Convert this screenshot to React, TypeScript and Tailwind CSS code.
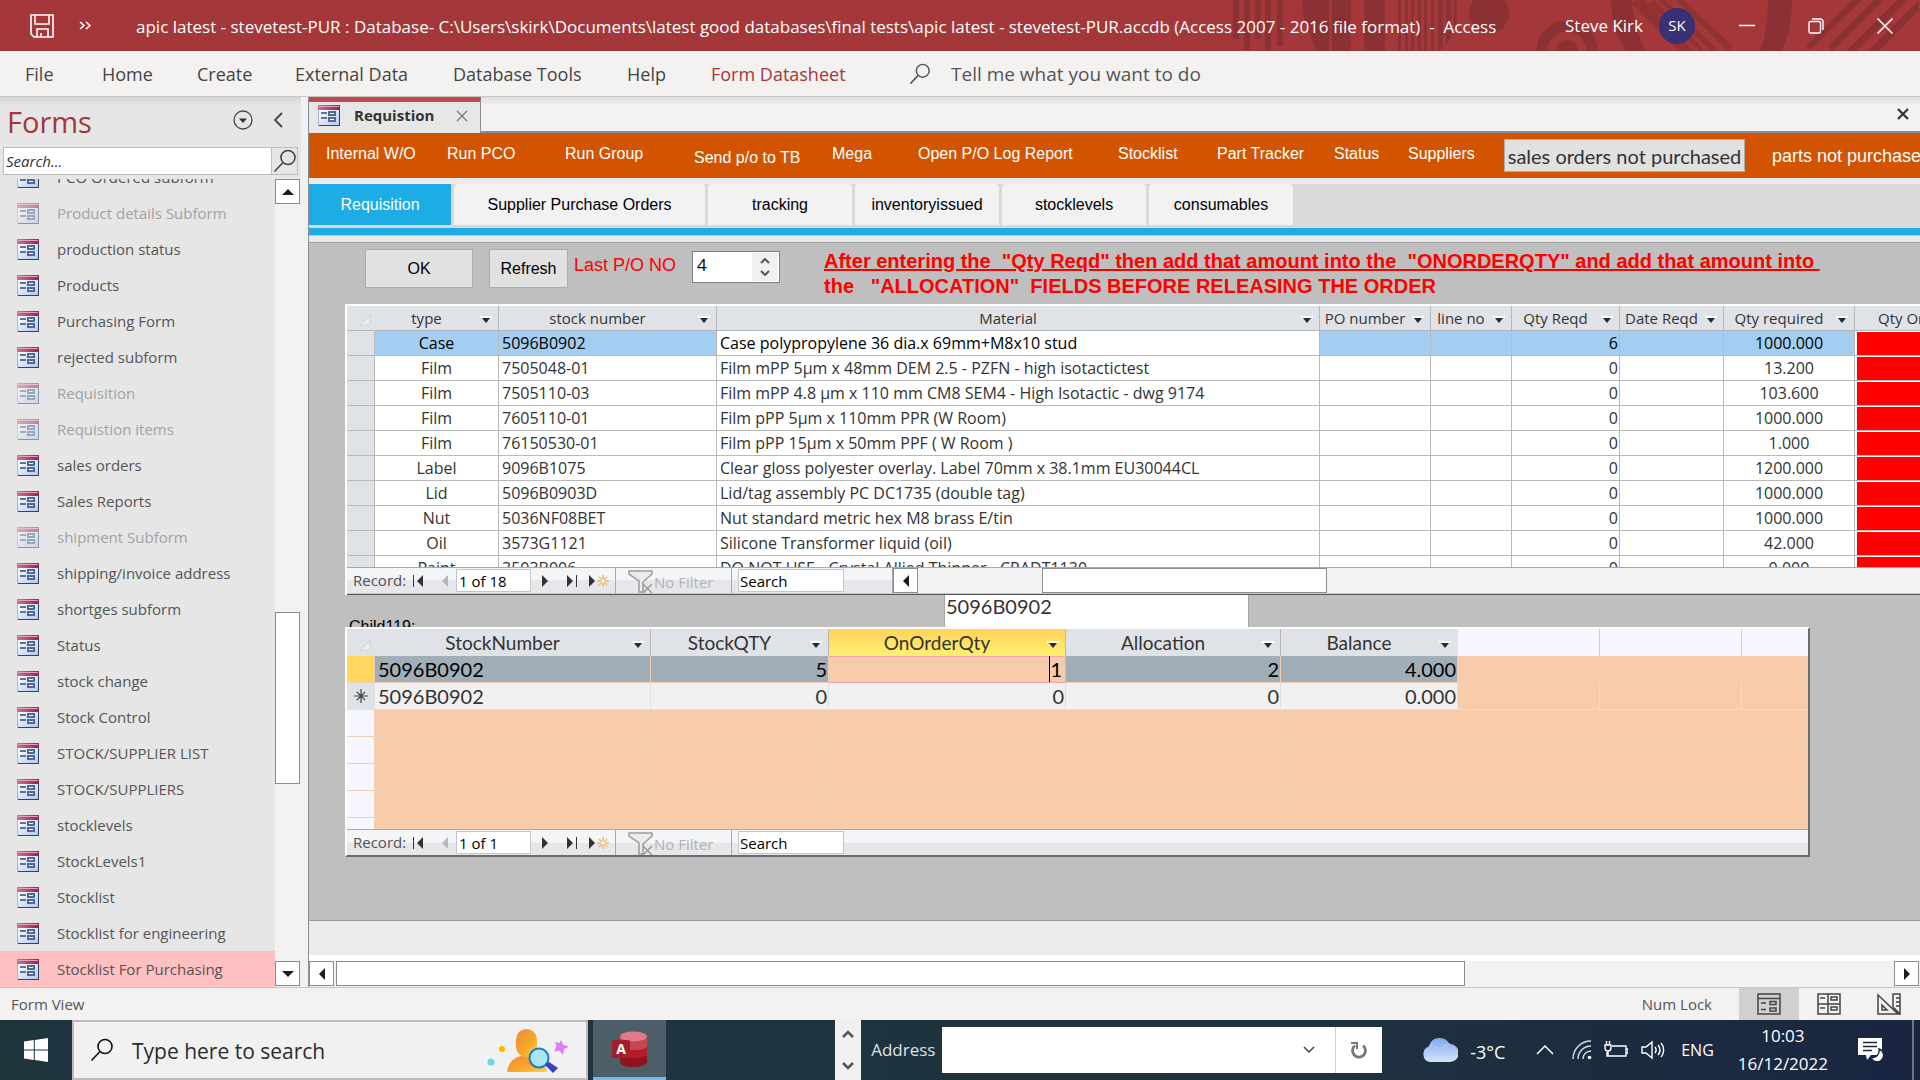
import type { ReactNode } from "react";

const UI = "font-['Segoe_UI','Open_Sans',sans-serif]";
const ARIAL = "font-['Liberation_Sans',Arial,sans-serif]";
const GEO = "font-['Lato',sans-serif]";

const formsList: { name: string; hidden?: boolean; selected?: boolean }[] = [
  { name: "PCO Ordered subform" },
  { name: "Product details Subform", hidden: true },
  { name: "production status" },
  { name: "Products" },
  { name: "Purchasing Form" },
  { name: "rejected subform" },
  { name: "Requisition", hidden: true },
  { name: "Requistion items", hidden: true },
  { name: "sales orders" },
  { name: "Sales Reports" },
  { name: "shipment Subform", hidden: true },
  { name: "shipping/invoice address" },
  { name: "shortges subform" },
  { name: "Status" },
  { name: "stock change" },
  { name: "Stock Control" },
  { name: "STOCK/SUPPLIER LIST" },
  { name: "STOCK/SUPPLIERS" },
  { name: "stocklevels" },
  { name: "StockLevels1" },
  { name: "Stocklist" },
  { name: "Stocklist for engineering" },
  { name: "Stocklist For Purchasing", selected: true },
];

const materials = [
  ["Case", "5096B0902", "Case polypropylene 36 dia.x 69mm+M8x10 stud", "6", "1000.000"],
  ["Film", "7505048-01", "Film mPP 5µm x 48mm DEM 2.5 - PZFN - high isotactictest", "0", "13.200"],
  ["Film", "7505110-03", "Film mPP 4.8 µm x 110 mm CM8 SEM4 - High Isotactic - dwg 9174", "0", "103.600"],
  ["Film", "7605110-01", "Film pPP 5µm x 110mm PPR (W Room)", "0", "1000.000"],
  ["Film", "76150530-01", "Film pPP 15µm x 50mm PPF ( W Room )", "0", "1.000"],
  ["Label", "9096B1075", "Clear gloss polyester overlay. Label 70mm x 38.1mm EU30044CL", "0", "1200.000"],
  ["Lid", "5096B0903D", "Lid/tag assembly PC DC1735 (double tag)", "0", "1000.000"],
  ["Nut", "5036NF08BET", "Nut standard metric hex M8 brass E/tin", "0", "1000.000"],
  ["Oil", "3573G1121", "Silicone Transformer liquid (oil)", "0", "42.000"],
  ["Paint", "3503B006", "DO NOT USE - Crystal Allied Thinner - CRADT1130", "0", "0.000"],
];

const navLinks = [
  { label: "Internal W/O", cls: "w-[121px]" },
  { label: "Run PCO", cls: "w-[118px]" },
  { label: "Run Group", cls: "w-[129px]" },
  { label: "Send p/o to TB", cls: "w-[138px] self-end" },
  { label: "Mega", cls: "w-[86px]" },
  { label: "Open P/O Log Report", cls: "w-[200px]" },
  { label: "Stocklist", cls: "w-[99px]" },
  { label: "Part Tracker", cls: "w-[117px]" },
  { label: "Status", cls: "w-[74px]" },
  { label: "Suppliers", cls: "w-[96px]" },
];

const pageTabs = [
  { label: "Supplier Purchase Orders", cls: "w-[251px]" },
  { label: "tracking", cls: "w-36" },
  { label: "inventoryissued", cls: "w-36" },
  { label: "stocklevels", cls: "w-36" },
  { label: "consumables", cls: "w-36" },
];

function FormIcon({ faded }: { faded?: boolean }) {
  return (
    <svg viewBox="0 0 22 21" className={faded ? "h-[21px] w-[22px] shrink-0 opacity-50" : "h-[21px] w-[22px] shrink-0"} aria-hidden="true">
      <defs>
        <linearGradient id="formBody" x1="0" y1="0" x2="1" y2="1">
          <stop offset="0" stopColor="#ffffff" />
          <stop offset="1" stopColor="#b4c8ee" />
        </linearGradient>
        <linearGradient id="formTop" x1="0" y1="0" x2="1" y2="0">
          <stop offset="0" stopColor="#cf6f93" />
          <stop offset="1" stopColor="#8f2257" />
        </linearGradient>
      </defs>
      <rect x="0" y="0" width="22" height="21" fill="#2f4468" />
      <rect x="0" y="0" width="1" height="21" fill="#a9b6cc" />
      <rect x="1" y="5" width="20" height="15" fill="url(#formBody)" />
      <rect x="0" y="0" width="22" height="5" fill="url(#formTop)" />
      <rect x="1" y="1" width="20" height="1" fill="#e2a2ba" />
      <rect x="3" y="7" width="6" height="2" fill="#5f719c" />
      <rect x="3" y="12" width="6" height="2" fill="#5f719c" />
      <rect x="10" y="6" width="8" height="5" fill="#54678f" />
      <rect x="12" y="8" width="4" height="1" fill="#fff" />
      <rect x="10" y="12" width="8" height="5" fill="#54678f" />
      <rect x="12" y="14" width="4" height="1" fill="#fff" />
    </svg>
  );
}

function Magnifier({ className, stroke = "#444" }: { className: string; stroke?: string }) {
  return (
    <svg viewBox="0 0 24 24" className={className} fill="none" stroke={stroke} strokeWidth="1.6" aria-hidden="true">
      <circle cx="15" cy="8.5" r="7" />
      <path d="M10 13.5 1.5 22.5" />
    </svg>
  );
}

function Triangle({ dir, className = "" }: { dir: "up" | "down" | "left" | "right"; className?: string }) {
  const d = { up: "M0 9 6 3l6 6z", down: "M0 3h12L6 9z", left: "M9 0v12L3 6z", right: "M3 0v12l6-6z" }[dir];
  return (
    <svg viewBox="0 0 12 12" className={"h-3 w-3 " + className} fill="currentColor" aria-hidden="true">
      <path d={d} />
    </svg>
  );
}

function ScrollButton({ dir, label }: { dir: "up" | "down" | "left" | "right"; label: string }) {
  return (
    <button aria-label={label} className="flex h-[25px] w-[25px] shrink-0 items-center justify-center border border-[#8c8c8c] bg-white text-[#1c1c1c]">
      <Triangle dir={dir} />
    </button>
  );
}

function HeadCell({ children, cls = "" }: { children: ReactNode; cls?: string }) {
  return (
    <div className={"flex items-center pr-1 " + cls}>
      <span className="flex-1 whitespace-nowrap text-center">{children}</span>
      <button aria-label={`Filter ${children}`} className="flex w-4 shrink-0 justify-center pt-1">
        <svg viewBox="0 0 12 8" className="h-2 w-3" aria-hidden="true">
          <rect width="12" height="2" fill="#fff" />
          <path d="M2 2h8L6 7z" fill="#222a33" />
        </svg>
      </button>
    </div>
  );
}

function CornerMark() {
  return (
    <svg viewBox="0 0 12 12" className="ml-3 mt-1 h-3 w-3" aria-hidden="true">
      <path d="M11 1v10H1z" fill="#e8ebef" stroke="#c3cfe0" strokeWidth=".8" />
    </svg>
  );
}

function RecordNav({ position, id, scroll }: { position: string; id: string; scroll?: boolean }) {
  return (
    <div className={UI + " flex h-[26px] items-stretch border-t border-[#a5a8ad] bg-linear-to-b from-[#f4f5f7] from-50% to-[#e5e7ea] to-50% text-[15px] leading-[22px] text-[#4f5257]"}>
      <label htmlFor={id} className="w-[62px] shrink-0 pl-1.5 leading-6">Record:</label>
      <button aria-label="First record" className="flex w-6 shrink-0 items-center text-[#333]">
        <svg viewBox="0 0 16 12" className="ml-1 h-3 w-4" fill="currentColor" aria-hidden="true"><path d="M0 0h1v12H0zM10 0v12L4 6z" /></svg>
      </button>
      <button aria-label="Previous record" className="flex w-[23px] shrink-0 items-center justify-center text-[#b5b7bb]"><Triangle dir="left" /></button>
      <input id={id} defaultValue={position} className="my-px w-[75px] shrink-0 border border-[#c6c6c6] bg-white pl-0.5 text-black" />
      <button aria-label="Next record" className="flex w-7 shrink-0 items-center justify-center text-[#333]"><Triangle dir="right" /></button>
      <button aria-label="Last record" className="flex w-6 shrink-0 items-center justify-center text-[#333]">
        <svg viewBox="0 0 12 12" className="h-3 w-3" fill="currentColor" aria-hidden="true"><path d="M2 0v12l6-6zM11 0h1v12h-1z" /></svg>
      </button>
      <button aria-label="New record" className="flex w-8 shrink-0 items-center justify-center text-[#333]">
        <svg viewBox="0 0 22 14" className="h-3.5 w-[22px]" aria-hidden="true">
          <path d="M1 1v12l6-6z" fill="currentColor" />
          <g stroke="#eebb70" strokeWidth="1.6"><path d="M15 1v12M9 7h12M11 3l8 8M19 3l-8 8" /></g>
          <circle cx="15" cy="7" r="1.8" fill="#fff" />
        </svg>
      </button>
      <button disabled className="flex w-[117px] shrink-0 items-center border-x border-[#a5a8ad] pl-3 text-[#b1b3b7]">
        <svg viewBox="0 0 26 24" className="h-6 w-[26px]" fill="none" stroke="#9c9c9c" strokeWidth="1.5" aria-hidden="true">
          <path d="M1 2h23v3l-9 8v10h-4V12L1 5z" fill="#ececec" />
          <path d="M15 15l9 9M24 15l-9 9" />
        </svg>
        <span className="pt-0.5">No Filter</span>
      </button>
      <input aria-label="Search records" defaultValue="Search" className="my-px ml-1.5 w-[106px] shrink-0 border border-[#c6c6c6] bg-white pl-px text-black" />
      {scroll && (
        <>
          <div className="w-[49px] shrink-0 border-r border-[#a5a8ad]" />
          <div className="flex flex-1 bg-[#f2f2f2]">
            <ScrollButton dir="left" label="Scroll left" />
            <div className="ml-[124px] h-[25px] w-[285px] border border-[#8c8c8c] bg-white" />
          </div>
        </>
      )}
    </div>
  );
}

function TitleBar() {
  return (
    <header className="relative flex h-[51px] shrink-0 items-center overflow-hidden bg-[#a4373a] text-[17px] text-white">
      <svg viewBox="0 0 690 51" className="absolute right-0 top-0 h-[51px] w-[690px]" aria-hidden="true">
        <g fill="#8b3133">
          <path d="M3 0h6v39H3zM14 0h6v50h-6zM25 0h6v39h-6zM35 0h6v51h-6zM47 0h6v46h-6zM72 0h27v51H86C82 34 72 24 72 0zM102 0h19v51h-19zM134 0h21v51h-21z" />
          <path d="M168 0h3v51h-3zM175 0h3v51h-3zM181 0h3v51h-3zM188 0h3v51h-3zM194 0h3v51h-3zM201 0h3v51h-3zM208 0h5v48l-5 3zM216 0h5v38l-5 6zM224 0h3v26l-3 4z" />
          <circle cx="259" cy="13" r="20" />
          <circle cx="337" cy="51" r="11" />
          <path d="M381 0h21c0 10 6 38 14 51h-20c-12-18-15-36-15-51zM538 0h24c0 20-3 36-10 51h-22c6-15 8-33 8-51z" />
          <path d="M402 4l48 47h14L414 0h-8zM424 0l51 51h-5L418 4zM428 0h7l54 51h-8zM446 0h7l50 46-5 5z" opacity=".8" />
          <path d="M576 46 622 0h10l-52 50zM598 46 644 0h10l-52 51zM616 51 667 0h10l-51 51zM638 51 689 0v10l-40 41z" />
        </g>
        <circle cx="337" cy="51" r="25" fill="none" stroke="#8b3133" strokeWidth="11" />
      </svg>
      <div className="relative flex flex-1 items-center">
        <button aria-label="Save" className="ml-[30px]">
          <svg viewBox="0 0 24 24" className="h-6 w-6" fill="none" stroke="#fff" strokeWidth="1.6" aria-hidden="true">
            <path d="M1 1h22v22H4l-3-3zM5 1v9h14V1M7 23v-8h11v8M11 19v4" />
          </svg>
        </button>
        <button aria-label="Customize Quick Access Toolbar" className="ml-[25px]">
          <svg viewBox="0 0 13 9" className="h-[9px] w-[13px]" fill="none" stroke="#fff" strokeWidth="1.5" aria-hidden="true"><path d="M1 1l4 3.500L1 8M7 1l4 3.500L7 8" /></svg>
        </button>
        <h1 className="ml-11 whitespace-pre pt-0.5">{"apic latest - stevetest-PUR : Database- C:\\Users\\skirk\\Documents\\latest good databases\\final tests\\apic latest - stevetest-PUR.accdb (Access 2007 - 2016 file format)  -  Access"}</h1>
      </div>
      <div className="relative flex items-center">
        <span>Steve Kirk</span>
        <span className="ml-4 flex h-9 w-9 items-center justify-center rounded-full bg-[#3a3075] text-[15px]">SK</span>
        <button aria-label="Minimize" className="ml-[44px]"><svg viewBox="0 0 16 16" className="h-4 w-4" stroke="#fff" strokeWidth="1.5" aria-hidden="true"><path d="M0 7.500h16" /></svg></button>
        <button aria-label="Restore" className="ml-[53px]">
          <svg viewBox="0 0 16 16" className="h-4 w-4" fill="none" stroke="#fff" strokeWidth="1.4" aria-hidden="true"><rect x="1" y="3.500" width="11.500" height="11.500" rx="1.500" /><path d="M4 1h8.500A2.500 2.500 0 0 1 15 3.500V12" /></svg>
        </button>
        <button aria-label="Close" className="ml-[53px] mr-[27px]"><svg viewBox="0 0 16 16" className="h-4 w-4" stroke="#fff" strokeWidth="1.5" aria-hidden="true"><path d="M.5.5l15 15M15.500.5l-15 15" /></svg></button>
      </div>
    </header>
  );
}

function Ribbon() {
  const tabs = [
    { label: "File", cls: "w-[77px]" },
    { label: "Home", cls: "w-[95px]" },
    { label: "Create", cls: "w-[98px]" },
    { label: "External Data", cls: "w-[158px]" },
    { label: "Database Tools", cls: "w-[174px]" },
    { label: "Help", cls: "w-[84px]" },
    { label: "Form Datasheet", cls: "w-[198px] text-[#a4373a]" },
  ];
  return (
    <nav className="flex h-[46px] shrink-0 items-center border-b border-[#c8c6c4] bg-[#f3f2f1] pl-[25px] pt-0.5 text-[18px] text-[#444]">
      {tabs.map((t) => (
        <button key={t.label} className={"shrink-0 text-left " + t.cls}>{t.label}</button>
      ))}
      <label className="flex flex-1 items-center pb-px">
        <Magnifier className="h-[22px] w-[22px]" stroke="#555" />
        <input aria-label="Tell me what you want to do" placeholder="Tell me what you want to do" className="ml-5 flex-1 bg-transparent text-[19px] outline-none placeholder:text-[#555]" />
      </label>
    </nav>
  );
}

function NavigationPane() {
  return (
    <aside className="flex w-[301px] shrink-0 flex-col bg-linear-to-b from-[#d4d4d4] to-[#e6e6e6] to-1%">
      <div className="flex h-[50px] shrink-0 items-center pl-[7px]">
        <h2 className="flex-1 text-[29px] text-[#a4373a]">Forms</h2>
        <button aria-label="Pane menu" className="mb-1">
          <svg viewBox="0 0 20 20" className="h-5 w-5" aria-hidden="true"><circle cx="10" cy="10" r="9" fill="none" stroke="#444" strokeWidth="1.300" /><path d="M6 8.500h8l-4 4.500z" fill="#333" /></svg>
        </button>
        <button aria-label="Collapse pane" className="mb-1 ml-5 mr-[18px]">
          <svg viewBox="0 0 10 16" className="h-4 w-2.5" fill="none" stroke="#444" strokeWidth="1.800" aria-hidden="true"><path d="M9 1 2 8l7 7" /></svg>
        </button>
      </div>
      <div className="mx-[3px] flex h-7 shrink-0 border border-[#bcbcbc]">
        <input aria-label="Search forms" placeholder="Search..." className="min-w-0 flex-1 border-r border-[#bcbcbc] bg-white pl-0.5 text-[15px] italic outline-none placeholder:text-[#333]" />
        <button aria-label="Search" className="flex w-[25px] items-center justify-center"><Magnifier className="h-6 w-6" /></button>
      </div>
      <div className="mt-1 flex min-h-0 flex-1">
        <ul className="flex min-w-0 flex-1 flex-col justify-end overflow-hidden">
          {formsList.map((f) => (
            <li key={f.name} className={f.selected ? "flex h-9 shrink-0 items-center gap-[18px] bg-[#ffc0c2] pl-[17px]" : "flex h-9 shrink-0 items-center gap-[18px] pl-[17px]"}>
              <FormIcon faded={f.hidden} />
              <button className={f.hidden ? "text-left text-[15px] text-[#a2a2a2]" : "text-left text-[15px] text-[#555]"}>{f.name}</button>
            </li>
          ))}
        </ul>
        <div className="flex w-[26px] flex-col items-start bg-[#f2f2f2] pb-px">
          <ScrollButton dir="up" label="Scroll up" />
          <div className="flex-[409_1_0%]" />
          <div className="w-[25px] flex-[171_1_0%] border border-[#8c8c8c] bg-white" />
          <div className="flex-[177_1_0%]" />
          <ScrollButton dir="down" label="Scroll down" />
        </div>
      </div>
    </aside>
  );
}

function MaterialGrid() {
  return (
    <section className="ml-9 border-l-2 border-t-2 border-t-white border-l-white">
      <div className="h-[261px] overflow-hidden bg-white">
        <table className={UI + " w-[1600px] table-fixed border-separate border-spacing-0 text-[16px] text-[#333]"}>
          <colgroup>
            <col className="w-7" /><col className="w-[124px]" /><col className="w-[218px]" /><col className="w-[603px]" /><col className="w-[111px]" /><col className="w-[81px]" /><col className="w-[108px]" /><col className="w-[104px]" /><col className="w-[131px]" /><col />
          </colgroup>
          <thead className="bg-[#dfe2e7] text-[15px] leading-6 [&_th]:h-[25px] [&_th]:whitespace-nowrap [&_th]:border-b [&_th]:border-r [&_th]:border-[#b4b6ba] [&_th]:p-0 [&_th]:font-normal">
            <tr>
              <th className="border-r-[#dfe2e7]!"><CornerMark /></th>
              {["type", "stock number", "Material", "PO number", "line no", "Qty Reqd", "Date Reqd", "Qty required"].map((h) => (
                <th key={h}><HeadCell>{h}</HeadCell></th>
              ))}
              <th className="overflow-hidden pl-[23px]! text-left">Qty Ordered</th>
            </tr>
          </thead>
          <tbody className="[&_td]:h-[25px] [&_td]:border-b [&_td]:border-r [&_td]:border-[#b9b9b9] [&_td]:px-[3px] [&_td]:py-0 [&_td]:leading-6">
            {materials.map((m, i) => {
              const sel = i === 0;
              const hl = sel ? "bg-[#a3cef1] text-black" : "bg-white";
              return (
                <tr key={m[1]} className="whitespace-nowrap">
                  <td className="bg-[#dfe2e7]" />
                  <td className={"text-center " + hl}>{m[0]}</td>
                  <td className={hl}>{m[1]}</td>
                  <td className={sel ? "bg-white text-black" : "bg-white"}>{m[2]}</td>
                  <td className={hl} />
                  <td className={hl} />
                  <td className={"pr-px! text-right " + hl}>{m[3]}</td>
                  <td className={hl} />
                  <td className={"text-center " + hl}>{m[4]}</td>
                  <td className="bg-white p-0!"><div className="ml-0.5 mt-px h-[23px] bg-[#ff0000]" /></td>
                </tr>
              );
            })}
          </tbody>
        </table>
      </div>
      <RecordNav id="record-materials" position="1 of 18" scroll />
      <div className="h-0.5 border-b border-b-[#555] bg-[#c9c9c9]" />
    </section>
  );
}

function StockGrid() {
  const empty = [0, 1, 2, 3, 4];
  return (
    <section className="ml-9 mr-[110px] border-2 border-b-[#6b6b6b] border-l-white border-r-[#6b6b6b] border-t-white">
      <div className="h-[200px] overflow-hidden bg-[#f8ccaa]">
        <table className={GEO + " w-full table-fixed border-separate border-spacing-0 text-[20px] text-[#333]"}>
          <colgroup>
            <col className="w-7" /><col className="w-[276px]" /><col className="w-[178px]" /><col className="w-[237px]" /><col className="w-[215px]" /><col className="w-[177px]" /><col className="w-[142px]" /><col className="w-[142px]" /><col />
          </colgroup>
          <thead className="bg-[#dfe2e7] text-[19px] leading-[26px] [&_th]:h-[27px] [&_th]:border-r [&_th]:border-[#b4b6ba] [&_th]:p-0 [&_th]:font-normal">
            <tr>
              <th className="border-r-[#dfe2e7]!"><CornerMark /></th>
              <th><HeadCell>StockNumber</HeadCell></th>
              <th><HeadCell>StockQTY</HeadCell></th>
              <th className="bg-linear-to-b from-[#ffd35c] to-[#fff06e]"><HeadCell>OnOrderQty</HeadCell></th>
              <th><HeadCell>Allocation</HeadCell></th>
              <th className="border-r-[#dfe2e7]!"><HeadCell>Balance</HeadCell></th>
              <th className="border-r-[#ecc7ac]! bg-[#f6f7fe]" /><th className="border-r-[#ecc7ac]! bg-[#f6f7fe]" /><th className="border-r-0! bg-[#f6f7fe]" />
            </tr>
          </thead>
          <tbody className="[&_td]:h-[27px] [&_td]:border-b [&_td]:border-r [&_td]:border-[#edcdb4] [&_td]:px-[3px] [&_td]:py-0 [&_td]:leading-[26px]">
            <tr className="text-black [&_td]:bg-[#a1aeb7]">
              <td className="bg-[#ffd75f]!" />
              <td>5096B0902</td>
              <td className="pr-px! text-right">5</td>
              <td className="border-[#f4a4a8]! bg-[#f8ccaa]! text-right shadow-[inset_0_1px_0_#f4a4a8]"><span className="inline-block border-l border-black">1</span></td>
              <td className="pr-px! text-right">2</td>
              <td className="pr-px! text-right">4.000</td>
              <td className="bg-[#f8ccaa]!" /><td className="bg-[#f8ccaa]!" /><td className="border-r-0! bg-[#f8ccaa]!" />
            </tr>
            <tr className="[&_td]:bg-[#f1f1f1] [&_td]:border-[#dfe0e2]!">
              <td className="bg-[#dfe2e7]!">
                <svg viewBox="0 0 14 14" className="mx-auto h-3.5 w-3.5" stroke="#444" strokeWidth="1.200" aria-label="New record"><path d="M7 0v14M0 7h14M3 3l8 8M11 3l-8 8" /></svg>
              </td>
              <td>5096B0902</td>
              <td className="pr-px! text-right">0</td>
              <td className="pr-px! text-right">0</td>
              <td className="pr-px! text-right">0</td>
              <td className="pr-px! text-right">0.000</td>
              <td className="border-[#edcdb4]! bg-[#f8ccaa]!" /><td className="border-[#edcdb4]! bg-[#f8ccaa]!" /><td className="border-[#edcdb4]! border-r-0! bg-[#f8ccaa]!" />
            </tr>
            {empty.map((r) => (
              <tr key={r}>
                <td className="bg-[#f6f7fe]" />
                <td /><td /><td /><td /><td /><td /><td /><td className="border-r-0!" />
              </tr>
            ))}
          </tbody>
        </table>
      </div>
      <RecordNav id="record-stock" position="1 of 1" />
    </section>
  );
}

function FormBody() {
  return (
    <div className="flex min-h-0 flex-1 flex-col overflow-hidden border-t border-[#a0a0a0] bg-[#bfbfbf]">
      <div className="flex h-[61px] shrink-0 items-start pl-14 pt-1.5">
        <button className={ARIAL + " h-[39px] w-[108px] shrink-0 border border-[#adadad] bg-[#e1e1e1] text-[16px] text-black"}>OK</button>
        <button className={ARIAL + " ml-4 h-[39px] w-[79px] shrink-0 border border-[#adadad] bg-[#e1e1e1] text-[16px] text-black"}>Refresh</button>
        <label htmlFor="last-po" className={ARIAL + " ml-1.5 mt-1 w-[118px] shrink-0 text-[18px] leading-6 text-[#ff0000]"}>Last P/O NO</label>
        <div className="mt-0.5 flex h-8 w-[88px] shrink-0 border border-[#7c7f87] bg-white p-px">
          <input id="last-po" defaultValue="4" className="min-w-0 flex-1 pb-1 pl-[3px] text-[17px] text-black outline-none" />
          <div className="flex w-[26px] flex-col items-center justify-evenly bg-[#f0f0f0]">
            <button aria-label="Increase"><svg viewBox="0 0 10 6" className="h-1.5 w-2.5" fill="none" stroke="#555" strokeWidth="2" aria-hidden="true"><path d="M1 5l4-4 4 4" /></svg></button>
            <button aria-label="Decrease"><svg viewBox="0 0 10 6" className="h-1.5 w-2.5" fill="none" stroke="#555" strokeWidth="2" aria-hidden="true"><path d="M1 1l4 4 4-4" /></svg></button>
          </div>
        </div>
        <p className={ARIAL + " ml-[44px] whitespace-pre text-[20px] font-bold leading-[25px] text-[#ff0000]"}>
          <span className="underline decoration-2">{'After entering the  "Qty Reqd" then add that amount into the  "ONORDERQTY" and add that amount into '}</span>
          {'\nthe   "ALLOCATION"  FIELDS BEFORE RELEASING THE ORDER'}
        </p>
      </div>
      <MaterialGrid />
      <div className="flex h-8 shrink-0 overflow-hidden pl-10">
        <span className={ARIAL + " w-[595px] shrink-0 pt-[22px] text-[16px] leading-5 text-black"}>Child119:</span>
        <input aria-label="Stock number" defaultValue="5096B0902" className={GEO + " h-full w-[305px] border-x border-[#a5a5a5] bg-white pb-2.5 pl-px text-[20px] leading-6 text-[#333]"} />
      </div>
      <StockGrid />
    </div>
  );
}

function Workspace() {
  return (
    <main className="flex min-w-0 flex-1 flex-col bg-[#f3f2f1]">
      <div className="flex h-9 shrink-0">
        <div className="flex w-[172px] items-center border-r border-t-[5px] border-[#8a8d96] border-t-[#bd4b53] bg-[#e7e7e7] pb-1 pl-[9px] text-[15px] font-bold text-[#333]">
          <FormIcon />
          <span className="flex-1 pl-3.5">Requistion</span>
          <button aria-label="Close tab" className="mr-3"><svg viewBox="0 0 12 12" className="h-3 w-3" stroke="#777" strokeWidth="1.200" aria-hidden="true"><path d="M1 1l10 10M11 1 1 11" /></svg></button>
        </div>
        <div className="flex flex-1 items-center justify-end border-b-2 border-[#8a8d96] bg-linear-to-b from-[#dedddc] to-[#f3f2f1] to-25% pr-[11px]">
          <button aria-label="Close object"><svg viewBox="0 0 12 12" className="h-3 w-3" stroke="#333" strokeWidth="2.200" aria-hidden="true"><path d="M1 1l10 10M11 1 1 11" /></svg></button>
        </div>
      </div>
      <nav className={ARIAL + " flex h-[45px] shrink-0 items-center overflow-hidden bg-[#d35400] pl-[17px] text-white"}>
        <div className="flex h-7 shrink-0 text-[16px] leading-6">
          {navLinks.map((n) => (
            <a key={n.label} href="#" className={"shrink-0 whitespace-nowrap " + n.cls}>{n.label}</a>
          ))}
        </div>
        <button className={GEO + " h-[33px] w-[241px] shrink-0 whitespace-nowrap border border-[#adadad] bg-[#e1e1e1] text-[20px] leading-6 text-[#333]"}>sales orders not purchased</button>
        <a href="#" className="ml-[27px] whitespace-nowrap text-[18px] leading-6">parts not purchased</a>
      </nav>
      <div className="h-1.5 shrink-0 bg-[#ebebeb]" />
      <div className={ARIAL + " flex h-11 shrink-0 gap-[3px] bg-[#d9d9d9] pb-[3px] text-[16px] text-black"}>
        <button className="w-[142px] shrink-0 bg-[#1eace6] text-white">Requisition</button>
        {pageTabs.map((t) => (
          <button key={t.label} className={"shrink-0 rounded-t bg-[#f2f2f2] " + t.cls}>{t.label}</button>
        ))}
      </div>
      <div className="h-2 shrink-0 border-b border-[#c8c8c8] bg-[#1eace6]" />
      <div className="h-1.5 shrink-0 bg-[#ebebeb]" />
      <FormBody />
      <div className="h-[35px] shrink-0 border-t border-[#9a9a9a] bg-[#ebebeb]" />
      <div className="flex shrink-0 gap-0.5 border-t-[6px] border-white bg-[#f2f2f2] pb-px pr-px">
        <ScrollButton dir="left" label="Scroll left" />
        <div className="h-[25px] flex-[1130_1_0%] border border-[#8c8c8c] bg-white" />
        <div className="flex-[426_1_0%]" />
        <ScrollButton dir="right" label="Scroll right" />
      </div>
    </main>
  );
}

function StatusBar() {
  return (
    <footer className="flex h-[33px] shrink-0 items-center border-t border-[#c8c6c4] bg-[#f3f2f1] pl-[11px] text-[15px] text-[#555]">
      <span className="flex-1">Form View</span>
      <span className="mr-[27px]">Num Lock</span>
      <button aria-label="Form View" className="flex h-full w-[60px] items-center justify-center bg-[#d2d0ce]">
        <svg viewBox="0 0 24 22" className="h-[22px] w-6" fill="none" stroke="#444" strokeWidth="1.500" aria-hidden="true"><path d="M1 1h22v20H1zM1 5.500h22M4 10h5M4 16.500h5M13 8.500h6v3h-6zM13 15h6v3h-6z" /></svg>
      </button>
      <button aria-label="Layout View" className="flex h-full w-[60px] items-center justify-center">
        <svg viewBox="0 0 24 22" className="h-[22px] w-6" fill="none" stroke="#444" strokeWidth="1.500" aria-hidden="true"><path d="M1 1h22v20H1zM1 11h22M11 1v20M3 5h5M3 15h5M14 4h6v3h-6zM14 14h6v3h-6z" /></svg>
      </button>
      <button aria-label="Design View" className="mr-px flex h-full w-[60px] items-center justify-center">
        <svg viewBox="0 0 24 22" className="h-[22px] w-6" fill="none" stroke="#444" strokeWidth="1.500" aria-hidden="true"><path d="M1 2v19h20zM5 12v5h5zM16 14V1h7v20l-7-7M19 5h4M19 9h4M19 13h4" /></svg>
      </button>
    </footer>
  );
}

function Taskbar() {
  return (
    <div className="flex h-[60px] shrink-0 items-stretch bg-linear-to-r from-[#1f353e] via-[#1f323f] via-70% to-[#192541] text-white">
      <button aria-label="Start" className="flex w-[72px] shrink-0 items-center justify-center">
        <svg viewBox="0 0 24 24" className="h-6 w-6" fill="#fff" aria-hidden="true"><path d="M0 3.500 9.800 2.100v9.400H0zM10.800 2 24 0v11.500H10.800zM0 12.500h9.800v9.400L0 20.500zM10.800 12.500H24V24l-13.200-2z" /></svg>
      </button>
      <div className="flex w-[516px] shrink-0 items-center border-2 border-[#bcbcbc] bg-[#f1f1f1] pl-4">
        <Magnifier className="h-6 w-6" stroke="#111" />
        <input aria-label="Type here to search" placeholder="Type here to search" className="ml-[18px] min-w-0 flex-1 bg-transparent pt-1 text-[21px] outline-none placeholder:text-[#2b2b2b]" />
        <svg viewBox="0 0 84 46" className="mr-4 h-[46px] w-[84px]" aria-hidden="true">
          <defs>
            <linearGradient id="person" x1="0" y1="0" x2="1" y2="1"><stop offset="0" stopColor="#f08a3c" /><stop offset=".6" stopColor="#f7a928" /><stop offset="1" stopColor="#ffd54a" /></linearGradient>
          </defs>
          <circle cx="16" cy="22" r="3" fill="#ffb400" />
          <circle cx="5" cy="35" r="3.500" fill="#6ad5e8" />
          <path d="M21 45c1-9 6-14 14-16h12c8 2 13 7 14 16z" fill="url(#person)" />
          <rect x="30" y="2" width="21" height="28" rx="10.500" fill="url(#person)" />
          <circle cx="53" cy="31" r="9.500" fill="#a8e6f7" stroke="#1b78d0" strokeWidth="2" />
          <path d="M59 38l4-3 9 6-5 5z" fill="#3a3fc8" />
          <path d="M75 13l2.500 5 5.500 1.500-5 2.500-1 6-3.500-4.500-5.500 1 2.500-5-1.500-4.500 4.500 1z" fill="#dd7cf5" />
        </svg>
      </div>
      <button aria-label="Access" className="ml-[5px] flex w-[73px] shrink-0 items-center justify-center border-b-[3px] border-[#76b9ed] bg-[#4c5e68]">
        <svg viewBox="0 0 36 36" className="h-9 w-9" aria-hidden="true">
          <path d="M8 5v26c0 3 6 5 13 5s14-2 14-5V5z" fill="#8f1420" />
          <path d="M8 5v18c0 3 6 4 13 4s14-1 14-4V5z" fill="#b31e2d" />
          <path d="M8 5v10c0 3 6 4 13 4s14-1 14-4V5z" fill="#c94556" />
          <ellipse cx="21.500" cy="5.500" rx="13.500" ry="5" fill="#e07a87" />
          <rect x="0" y="9" width="18" height="18" rx="2" fill="#a51c2c" />
          <text x="9" y="23" textAnchor="middle" fontSize="14" fontWeight="700" fill="#fff" fontFamily="Open Sans">A</text>
        </svg>
      </button>
      <div className="flex-1" />
      <div className="flex w-[26px] shrink-0 flex-col items-center justify-between bg-[#f0f0f0] py-2.5">
        <button aria-label="Scroll toolbar up" className="flex"><svg viewBox="0 0 12 8" className="h-2 w-3" fill="none" stroke="#555" strokeWidth="2.500" aria-hidden="true"><path d="M1 7l5-5 5 5" /></svg></button>
        <button aria-label="Scroll toolbar down" className="flex"><svg viewBox="0 0 12 8" className="h-2 w-3" fill="none" stroke="#555" strokeWidth="2.500" aria-hidden="true"><path d="M1 1l5 5 5-5" /></svg></button>
      </div>
      <label htmlFor="address" className="flex w-[81px] shrink-0 items-center pl-2.5 text-[17px] text-[#dde2e5]">Address</label>
      <div className="my-[7px] flex w-[440px] shrink-0 items-center bg-white">
        <input id="address" className="h-full min-w-0 flex-1 text-black outline-none" />
        <button aria-label="Show addresses" className="px-5"><svg viewBox="0 0 12 8" className="h-2 w-3" fill="none" stroke="#444" strokeWidth="1.500" aria-hidden="true"><path d="M1 1l5 5 5-5" /></svg></button>
        <button aria-label="Refresh address" className="flex h-full w-[47px] items-center justify-center border-l border-[#d0d0d0]">
          <svg viewBox="0 0 18 18" className="h-[18px] w-[18px]" fill="none" stroke="#777" strokeWidth="2.800" aria-hidden="true"><path d="M5 4.500A6.500 6.500 0 1 0 13 4.500" /><path d="M1 2h6v6" strokeWidth="2" /></svg>
        </button>
      </div>
      <div className="flex shrink-0 items-center text-[17px]">
        <svg viewBox="0 0 36 26" className="ml-10 h-[26px] w-9" aria-hidden="true">
          <defs><linearGradient id="cloud" x1="0" y1="0" x2="0" y2="1"><stop offset="0" stopColor="#7fa9ee" /><stop offset="1" stopColor="#d5e4fc" /></linearGradient></defs>
          <path d="M8 25a8 8 0 0 1-1-15.500A11 11 0 0 1 27.500 7 9 9 0 0 1 28 25z" fill="url(#cloud)" />
          <path d="M7 9.500c5-1 9 1 11 5 2-5 6-7 10-7.500" fill="none" stroke="#a9c6f6" strokeWidth="1.500" />
        </svg>
        <span className="ml-3 w-[66px] pt-1 text-[18px]">-3°C</span>
        <button aria-label="Show hidden icons"><svg viewBox="0 0 18 10" className="h-2.5 w-[18px]" fill="none" stroke="#fff" strokeWidth="1.500" aria-hidden="true"><path d="M1 9l8-8 8 8" /></svg></button>
        <svg viewBox="0 0 20 20" className="ml-[18px] h-5 w-5" fill="none" stroke="#d8dce2" strokeWidth="1.400" aria-label="Wi-Fi"><path d="M1 19A18 18 0 0 1 19 1M6 19A13 13 0 0 1 19 6M11 19a8 8 0 0 1 8-8" /><circle cx="17.500" cy="17.500" r="1.800" fill="#fff" stroke="none" /></svg>
        <svg viewBox="0 0 24 18" className="ml-3 h-[18px] w-6" fill="none" stroke="#fff" strokeWidth="1.400" aria-label="Battery charging"><path d="M8 5h14v10H3v-4M22 8h2v4h-2M1 4h6v3a3 3 0 0 1-6 0zM2.500 0v4M5.500 0v4M4 10v5" /></svg>
        <svg viewBox="0 0 24 20" className="ml-[13px] h-5 w-6" fill="none" stroke="#fff" strokeWidth="1.400" aria-label="Volume"><path d="M1 7h4l6-5v16l-6-5H1zM14 7c1.500 2 1.500 4 0 6M17 5c2.500 3 2.500 7 0 10M20 3c3.500 4 3.500 10 0 14" /></svg>
        <span className="ml-4 text-[16px]">ENG</span>
        <div className="ml-6 text-center leading-7"><div>10:03</div><div>16/12/2022</div></div>
        <button aria-label="Notifications" className="ml-[30px]">
          <svg viewBox="0 0 26 26" className="h-[26px] w-[26px]" aria-hidden="true">
            <path d="M0 1h24v17h-11l-4 5-1-5H0z" fill="#fff" />
            <path d="M5 5.500h14M5 9.500h14M5 13.500h9" stroke="#1b2841" strokeWidth="1.400" />
            <path d="M21 12a6.500 6.500 0 1 1-8 8.500 7 7 0 0 0 8-8.500z" fill="#fff" stroke="#1b2841" strokeWidth="1.400" />
          </svg>
        </button>
        <div className="ml-7 mr-1.5 h-full w-0.5 bg-[#6d7688]" />
      </div>
    </div>
  );
}

export default function App() {
  return (
    <div className={UI + " flex h-screen flex-col overflow-hidden bg-[#f3f2f1]"}>
      <TitleBar />
      <Ribbon />
      <div className="flex min-h-0 flex-1">
        <NavigationPane />
        <div className="w-2 shrink-0 border-r border-[#8a8d96] bg-[#f0f1f3]" />
        <Workspace />
      </div>
      <StatusBar />
      <Taskbar />
    </div>
  );
}
